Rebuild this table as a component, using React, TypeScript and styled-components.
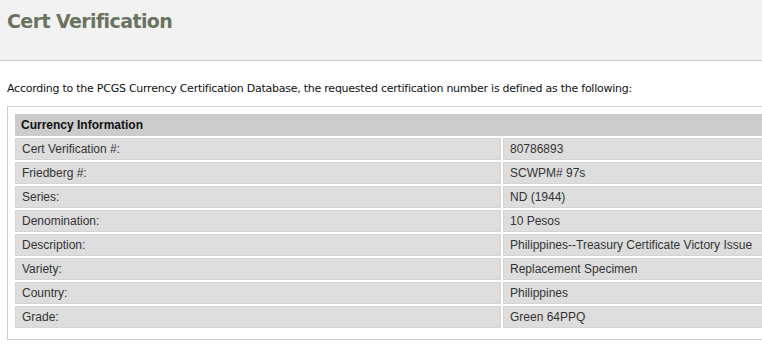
import React from "react";
import styled, { createGlobalStyle } from "styled-components";

const GlobalStyle = createGlobalStyle`
  html, body {
    margin: 0;
    padding: 0;
    background: #fff;
    overflow: hidden;
  }
`;

const rows: [string, string][] = [
  ["Cert Verification #:", "80786893"],
  ["Friedberg #:", "SCWPM# 97s"],
  ["Series:", "ND (1944)"],
  ["Denomination:", "10 Pesos"],
  ["Description:", "Philippines--Treasury Certificate Victory Issue"],
  ["Variety:", "Replacement Specimen"],
  ["Country:", "Philippines"],
  ["Grade:", "Green 64PPQ"],
];

const Page = styled.div`
  width: 900px;
  font-family: "DejaVu Sans", Verdana, sans-serif;
`;

const TitleBar = styled.header`
  height: 61px;
  background: #f2f2f2;
  border-bottom: 1px solid #c8c8c4;
  padding: 10px 7px 0;
  box-sizing: border-box;
`;

const Title = styled.h1`
  margin: 0;
  font-family: "DejaVu Sans", Verdana, sans-serif;
  font-size: 19px;
  font-weight: bold;
  letter-spacing: -0.6px;
  color: #6a7361;
`;

const Intro = styled.p`
  margin: 21px 7px 11px;
  font-size: 11px;
  letter-spacing: -0.25px;
  color: #111;
`;

const Box = styled.div`
  margin-left: 7px;
  border: 1px solid #d0d0d0;
  padding: 5px 5px 9px;
`;

const Table = styled.table`
  width: 100%;
  border-spacing: 2px;
  font-family: "Liberation Sans", Arial, sans-serif;
  font-size: 12px;
  color: #333;
`;

const HeadCell = styled.th`
  height: 22px;
  padding: 0 6px;
  box-sizing: border-box;
  background: #cccccc;
  color: #111;
  text-align: left;
  font-weight: bold;
`;

const Cell = styled.td<{ $label?: boolean }>`
  height: 22px;
  padding: 0 6px;
  box-sizing: border-box;
  background: #dddddd;
  border: 1px solid #d4d4d4;
  width: ${(p) => (p.$label ? "486px" : "auto")};
`;

export default function App() {
  return (
    <Page>
      <GlobalStyle />
      <TitleBar>
        <Title>Cert Verification</Title>
      </TitleBar>
      <Intro>
        According to the PCGS Currency Certification Database, the requested
        certification number is defined as the following:
      </Intro>
      <Box>
        <Table>
          <thead>
            <tr>
              <HeadCell colSpan={2}>Currency Information</HeadCell>
            </tr>
          </thead>
          <tbody>
            {rows.map(([label, value]) => (
              <tr key={label}>
                <Cell $label>{label}</Cell>
                <Cell>{value}</Cell>
              </tr>
            ))}
          </tbody>
        </Table>
      </Box>
    </Page>
  );
}
